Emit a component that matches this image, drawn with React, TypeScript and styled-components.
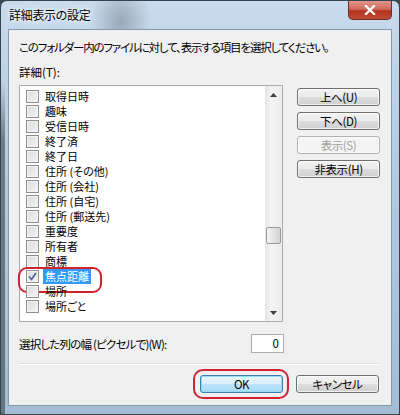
import React from 'react';
import styled, { createGlobalStyle, css } from 'styled-components';

const GlobalStyle = createGlobalStyle`
  html, body {
    margin: 0;
    padding: 0;
    background: #3a4650;
  }
  body {
    width: 400px;
    height: 415px;
    overflow: hidden;
    font-family: 'Noto Sans CJK JP', 'Liberation Sans', sans-serif;
    font-size: 12px;
    font-feature-settings: 'palt';
    color: #000;
  }
`;

// Items visible in the list, in order.
const items = [
  '取得日時',
  '趣味',
  '受信日時',
  '終了済',
  '終了日',
  '住所 (その他)',
  '住所 (会社)',
  '住所 (自宅)',
  '住所 (郵送先)',
  '重要度',
  '所有者',
  '商標',
  '焦点距離',
  '場所',
  '場所ごと',
];
const selectedIndex = 12;

const CheckMark = () => (
  <svg width="9" height="9" viewBox="0 0 9 9">
    <path d="M1 4.5 L3.5 7.5 L8 1" fill="none" stroke="#4a5f97" strokeWidth="1.6" />
  </svg>
);

const CloseGlyph = () => (
  <svg width="12" height="10" viewBox="0 0 12 10">
    <path d="M2 1 L10 9 M10 1 L2 9" stroke="#fff" strokeWidth="2.4" strokeLinecap="square" />
  </svg>
);

const Arrow = ({ down }: { down?: boolean }) => (
  <svg width="7" height="4" viewBox="0 0 7 4">
    <path d={down ? 'M0 0 H7 L3.5 4 Z' : 'M0 4 H7 L3.5 0 Z'} fill="#3a3a3a" />
  </svg>
);

export default function App() {
  return (
    <>
      <GlobalStyle />
      <Window>
        <TitleBar>
          <Title>詳細表示の設定</Title>
          <CloseButton>
            <CloseGlyph />
          </CloseButton>
        </TitleBar>
        <Client>
          <Description>このフォルダー内のファイルに対して、表示する項目を選択してください。</Description>
          <FieldLabel>詳細(T):</FieldLabel>
          <ListArea>
            <ListBox>
              <Rows>
                {items.map((name, i) => (
                  <Row key={name}>
                    <CheckBox>{i === selectedIndex && <CheckMark />}</CheckBox>
                    <RowText $selected={i === selectedIndex}>{name}</RowText>
                    {i === selectedIndex && <RowMark />}
                  </Row>
                ))}
              </Rows>
              <ScrollBar>
                <ScrollArrow>
                  <Arrow />
                </ScrollArrow>
                <Track>
                  <Thumb />
                </Track>
                <ScrollArrow>
                  <Arrow down />
                </ScrollArrow>
              </ScrollBar>
            </ListBox>
            <SideButtons>
              <Button>上へ(U)</Button>
              <Button>下へ(D)</Button>
              <Button $disabled>表示(S)</Button>
              <Button>非表示(H)</Button>
            </SideButtons>
          </ListArea>
          <WidthRow>
            <WidthLabel>選択した列の幅 (ピクセルで)(W):</WidthLabel>
            <NumberBox>0</NumberBox>
          </WidthRow>
          <Separator />
          <Footer>
            <Marked>
              <Button $default>OK</Button>
              <FooterMark />
            </Marked>
            <Button>キャンセル</Button>
          </Footer>
        </Client>
      </Window>
    </>
  );
}

const Window = styled.div`
  width: 400px;
  height: 415px;
  box-sizing: border-box;
  border: 1px solid #37434e;
  border-radius: 7px 7px 2px 2px;
  background:
    linear-gradient(180deg, transparent 80px, rgba(45, 60, 55, 0.55) 140px) left / 4px 100% no-repeat,
    radial-gradient(ellipse 30px 40px at 120px 20px, rgba(70, 80, 90, 0.35), transparent),
    linear-gradient(180deg, #c9dbec 0%, #b3cae1 40%, #a4bdd6 100%);
  display: flex;
  flex-direction: column;
  padding: 0 7px 8px 7px;
`;

const TitleBar = styled.div`
  height: 28px;
  display: flex;
  align-items: flex-start;
  justify-content: space-between;
`;

const Title = styled.div`
  padding: 6px 0 0 1px;
  font-size: 12px;
  line-height: 16px;
  letter-spacing: -0.3px;
  text-shadow: 0 0 6px #fff, 0 0 3px #fff;
`;

const CloseButton = styled.div`
  width: 44px;
  height: 19px;
  box-sizing: border-box;
  border: 1px solid #6b2c2c;
  border-top: none;
  border-radius: 0 0 5px 5px;
  background: linear-gradient(180deg, #e0968a 0%, #cf6a5a 45%, #b3321f 55%, #c24a34 100%);
  display: flex;
  align-items: center;
  justify-content: center;
`;

const Client = styled.div`
  flex: 1;
  background: #f0f0f0;
  border: 1px solid #8499ae;
  padding: 9px 9px 0 10px;
  display: flex;
  flex-direction: column;
`;

const Description = styled.div`
  line-height: 16px;
  font-size: 11.5px;
  letter-spacing: -1.15px;
  white-space: nowrap;
`;

const FieldLabel = styled.div`
  margin-top: 9px;
  line-height: 16px;
  font-size: 11.5px;
`;

const ListArea = styled.div`
  margin-top: 5px;
  display: flex;
  align-items: flex-start;
  gap: 14px;
`;

const ListBox = styled.div`
  width: 264px;
  height: 237px;
  box-sizing: border-box;
  border: 1px solid #acacac;
  background: #fff;
  display: flex;
`;

const Rows = styled.div`
  flex: 1;
  padding: 3px 0 0 6px;
  display: flex;
  flex-direction: column;
`;

const Row = styled.div`
  position: relative;
  height: 15px;
  display: flex;
  align-items: center;
`;

const CheckBox = styled.div`
  width: 13px;
  height: 13px;
  box-sizing: border-box;
  border: 1px solid #8f8f8f;
  background: linear-gradient(135deg, #dcdcdc, #f4f4f4);
  box-shadow: inset 0 0 0 1px #f4f4f4;
  display: flex;
  align-items: center;
  justify-content: center;
`;

const RowText = styled.span<{ $selected?: boolean }>`
  margin-left: 4px;
  padding: 0 2px;
  font-size: 11px;
  line-height: 15px;
  ${(p) =>
    p.$selected &&
    css`
      background: #3399ff;
      color: #fff;
    `}
`;

const RowMark = styled.div`
  position: absolute;
  left: -8px;
  top: -2px;
  width: 80px;
  height: 22px;
  border: 2px solid #d0232f;
  border-radius: 9px;
  pointer-events: none;
`;

const ScrollBar = styled.div`
  width: 17px;
  background: linear-gradient(90deg, #e6e6e6, #f4f4f4 40%, #ececec);
  display: flex;
  flex-direction: column;
`;

const ScrollArrow = styled.div`
  height: 17px;
  display: flex;
  align-items: center;
  justify-content: center;
`;

const Track = styled.div`
  flex: 1;
  display: flex;
  flex-direction: column;
  padding-top: 124px;
`;

const Thumb = styled.div`
  height: 15px;
  margin: 0 1px;
  border: 1px solid #9a9a9a;
  border-radius: 2px;
  background: linear-gradient(90deg, #f4f4f4, #e2e2e2 50%, #d2d2d2);
`;

const SideButtons = styled.div`
  margin-top: 3px;
  display: flex;
  flex-direction: column;
  gap: 6px;
`;

const Button = styled.div<{ $disabled?: boolean; $default?: boolean }>`
  width: 83px;
  height: 18px;
  box-sizing: border-box;
  border: 1px solid #707070;
  border-radius: 3px;
  background: linear-gradient(180deg, #f2f2f2 0%, #ebebeb 50%, #dddddd 51%, #cfcfcf 100%);
  box-shadow: inset 0 0 0 1px rgba(255, 255, 255, 0.7);
  display: flex;
  align-items: center;
  justify-content: center;
  line-height: 14px;
  font-size: 11.5px;
  letter-spacing: -0.4px;
  ${(p) =>
    p.$disabled &&
    css`
      border-color: #adb2b5;
      background: #f4f4f4;
      color: #a0a0a0;
    `}
  ${(p) =>
    p.$default &&
    css`
      border-color: #3c7fb1;
      background: linear-gradient(180deg, #eaf6fd 0%, #d9f0fc 50%, #bee6fd 51%, #a7d9f5 100%);
      box-shadow: inset 0 0 0 1px #9ad8f7;
    `}
`;

const WidthRow = styled.div`
  margin-top: 12px;
  display: flex;
  align-items: center;
  line-height: 16px;
`;

const WidthLabel = styled.span`
  width: 232px;
  font-size: 11.5px;
  letter-spacing: -0.8px;
  white-space: nowrap;
`;

const NumberBox = styled.div`
  width: 33px;
  height: 19px;
  box-sizing: border-box;
  border: 1px solid #abadb3;
  background: #fff;
  text-align: right;
  padding-right: 4px;
  line-height: 17px;
  font-size: 11.5px;
`;

const Separator = styled.div`
  margin-top: 10px;
  width: 359px;
  height: 1px;
  background: #d5dfe5;
  border-bottom: 1px solid #fff;
`;

const Footer = styled.div`
  margin-top: 10px;
  display: flex;
  justify-content: flex-end;
  gap: 13px;
  padding-right: 3px;
`;

const Marked = styled.div`
  position: relative;
`;

const FooterMark = styled.div`
  position: absolute;
  left: -7px;
  right: -6px;
  top: -6px;
  bottom: -6px;
  border: 2px solid #d0232f;
  border-radius: 10px;
  pointer-events: none;
`;
